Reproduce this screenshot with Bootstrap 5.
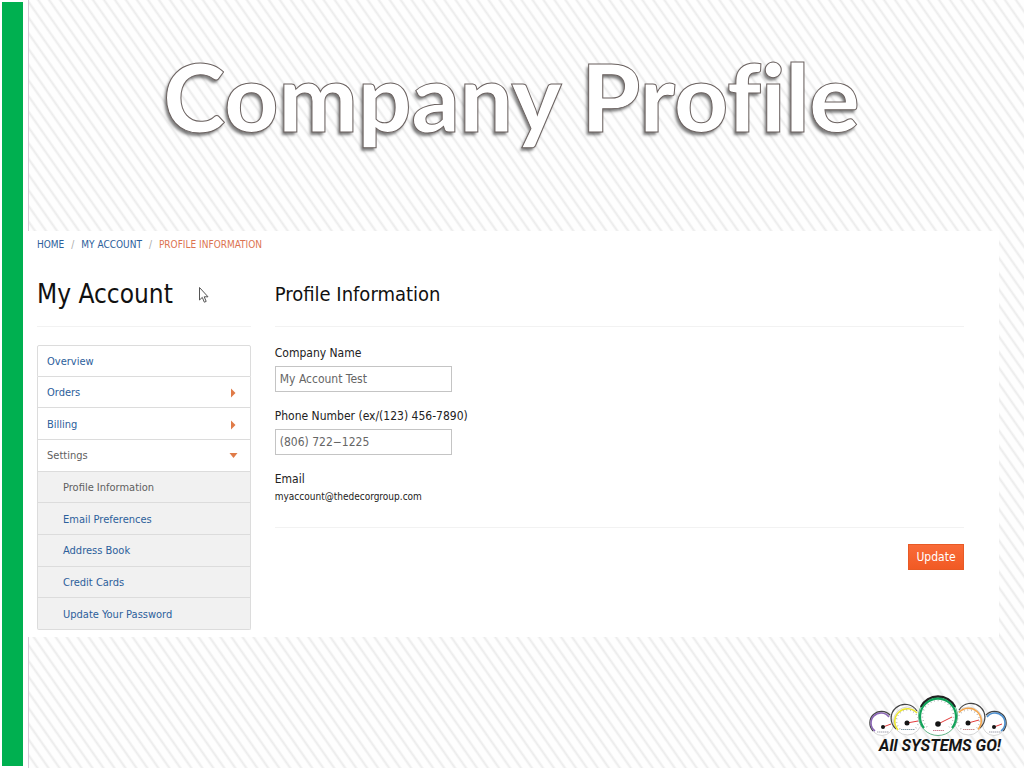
<!DOCTYPE html>
<html lang="en">
<head>
<meta charset="utf-8">
<meta name="viewport" content="width=device-width, initial-scale=1">
<title>Company Profile</title>
<link href="https://cdn.jsdelivr.net/npm/bootstrap@5.3.0/dist/css/bootstrap.min.css" rel="stylesheet">
<style>
body { font-family: "DejaVu Sans Condensed", "DejaVu Sans", sans-serif; font-size: 12px; line-height: 16px; color: #222; background: #fff; }
a { color: #2c609b; text-decoration: none; }
.side-bar { width: 21px; margin: 2px 5px 2px 2px; background: #00b050; }
.slide { border-left: 1px solid #d6cbd8; background: repeating-linear-gradient(55deg, #fefefe 0, #fefefe 5px, #ebebeb 7px, #fefefe 9px); }
.slide-title { font: 900 94px/115px Lato, sans-serif; font-variant-ligatures: none; color: #fff; -webkit-text-stroke: 1px #6b6260; text-shadow: -2px 3px 3px rgba(0,0,0,.5); padding: 38px 30px 78px 0; margin: 0; }
.panel { background: #fff; margin: 0 25px 0 -4px; padding: 6px 35px 7px 12px; }
.breadcrumb { font-size: 10px; margin-bottom: 25px; --bs-breadcrumb-item-padding-x: 7px; --bs-breadcrumb-divider-color: #aaa; --bs-breadcrumb-item-active-color: #dc7350; }
h2 { font-size: 26px; line-height: 32px; color: #111; margin: 0; font-weight: 400; }
h3 { font-size: 20px; line-height: 32px; color: #111; margin: 0; font-weight: 400; }
hr { border-color: #ccc; margin: 16px 0 18px; }
.side-menu { display: grid; grid-auto-rows: 1fr; min-height: 285px; font-size: 11px; --bs-list-group-border-radius: 2px; --bs-list-group-border-color: #dcdcdc; }
.side-menu .list-group-item { display: flex; align-items: center; justify-content: space-between; padding: 2px 12px 0 9px; color: #2c609b; }
.side-menu .sub-item { background: #f1f1f1; padding-left: 25px; }
.side-menu .current { color: #5f5f5f; }
.field { width: 177px; height: 26px; border: 1px solid #c4c4c4; border-radius: 0; padding: 0 4px; font-size: 12px; color: #666; }
.form-label { margin-bottom: 5px; }
.mail { font-size: 10px; margin-top: 2px; }
.form-end { margin: 22px 0 16px; }
.btn-update { width: 56px; height: 26px; padding: 0; border: 1px solid #e85a25; border-radius: 0; font-size: 12px; line-height: 16px; color: #fff; background: linear-gradient(#f96b38, #f15a24); }
.btn-update:hover { color: #fff; background: #e85a25; }
.pointer { left: 161px; top: 8px; }
.logo { margin: 0 15px 12px 0; }
</style>
</head>
<body>
<div class="d-flex min-vh-100">
  <div class="side-bar flex-shrink-0"></div>
  <main class="slide flex-grow-1 d-flex flex-column">
    <h1 class="slide-title text-center">Company Profile</h1>
    <section class="panel">
      <nav aria-label="breadcrumb">
        <ol class="breadcrumb">
          <li class="breadcrumb-item"><a href="#">HOME</a></li>
          <li class="breadcrumb-item"><a href="#">MY ACCOUNT</a></li>
          <li class="breadcrumb-item active" aria-current="page">PROFILE INFORMATION</li>
        </ol>
      </nav>
      <div class="row">
        <div class="col-3">
          <div class="position-relative">
            <h2>My Account</h2>
            <svg class="pointer position-absolute" width="12" height="18" viewBox="0 0 12 18"><path d="M1.500 1.500v12.500l2.800-2.600 2 4.800 1.900-.8-2-4.600h3.800z" fill="#fff" stroke="#555"/></svg>
          </div>
          <hr>
          <div class="list-group side-menu">
            <a href="#" class="list-group-item">Overview</a>
            <a href="#" class="list-group-item">Orders <svg width="9" height="10"><path d="M2 0.500L6.500 5 2 9.500z" fill="#e07b48"/></svg></a>
            <a href="#" class="list-group-item">Billing <svg width="9" height="10"><path d="M2 0.500L6.500 5 2 9.500z" fill="#e07b48"/></svg></a>
            <a href="#" class="list-group-item current">Settings <svg width="9" height="10"><path d="M0.500 2h8L4.500 7z" fill="#e07b48"/></svg></a>
            <a href="#" class="list-group-item sub-item current">Profile Information</a>
            <a href="#" class="list-group-item sub-item">Email Preferences</a>
            <a href="#" class="list-group-item sub-item">Address Book</a>
            <a href="#" class="list-group-item sub-item">Credit Cards</a>
            <a href="#" class="list-group-item sub-item">Update Your Password</a>
          </div>
        </div>
        <form class="col-9">
          <h3>Profile Information</h3>
          <hr>
          <div class="mb-3">
            <label class="form-label d-block" for="company">Company Name</label>
            <input class="field form-control" id="company" type="text" value="My Account Test">
          </div>
          <div class="mb-3">
            <label class="form-label d-block" for="phone">Phone Number (ex/(123) 456-7890)</label>
            <input class="field form-control" id="phone" type="tel" value="(806) 722−1225">
          </div>
          <div>Email</div>
          <div class="mail">myaccount@thedecorgroup.com</div>
          <hr class="form-end">
          <div class="text-end"><button type="button" class="btn btn-update">Update</button></div>
        </form>
      </div>
    </section>
    <footer class="mt-auto text-end">
      <svg class="logo" width="142" height="62" viewBox="867 693 142 62" role="img" aria-label="All Systems Go!">
        <g fill="#fff">
          <circle cx="882" cy="723" r="12"/><circle cx="994" cy="723" r="12"/>
          <circle cx="907.500" cy="720" r="14.500"/><circle cx="968.500" cy="720" r="14.500"/>
          <circle cx="938" cy="715" r="20"/>
        </g>
        <g fill="none" stroke="#bbb" stroke-width=".6">
          <circle cx="882" cy="723" r="11.500"/><circle cx="994" cy="723" r="11.500"/>
          <circle cx="907.500" cy="720" r="14"/><circle cx="968.500" cy="720" r="14"/>
        </g>
        <g fill="none" stroke="#444" stroke-width="1.200">
          <path d="M873 730a11.500 11.500 0 1 1 17-16M986 714a11.500 11.500 0 1 1 17 16"/>
          <path d="M896 728a14 14 0 1 1 21-18M959 709a14 14 0 1 1 21 18"/>
        </g>
        <g fill="none" stroke-width="1.600">
          <path d="M875 730a10 10 0 1 1 14-14" stroke="#8a65b5"/>
          <path d="M898 729a12.500 12.500 0 1 1 19-17" stroke="#eee72e"/>
          <path d="M959 711.500a12.500 12.500 0 1 1 19 17" stroke="#f5a54a"/>
          <path d="M987 716a10 10 0 1 1 14 14" stroke="#4c8fd0"/>
        </g>
        <circle cx="938" cy="715" r="19.500" fill="#fff" stroke="#3c9f69" stroke-width=".8"/>
        <path d="M921 706a19 19 0 0 1 34 0" fill="none" stroke="#222" stroke-width="2.500"/>
        <path d="M924 727a18 18 0 1 1 28 0" fill="none" stroke="#12a35a" stroke-width="2.200"/>
        <g fill="none" stroke="#999" stroke-dasharray=".6 3" stroke-width="1.500">
          <path d="M927 726a15.500 15.500 0 1 1 22 0M900 728a11 11 0 1 1 15 0M961 728a11 11 0 1 1 15 0"/>
        </g>
        <g stroke="#e23b3b" stroke-width="1">
          <path d="M938 723l14-7M907 722l11-2M968 722l11-3M883 726l8-3M994 726l8-3"/>
        </g>
        <g fill="#151515">
          <circle cx="938" cy="723" r="2.800"/><circle cx="907" cy="722" r="2.500"/><circle cx="968" cy="722" r="2.500"/><circle cx="883" cy="726" r="2"/><circle cx="994" cy="726" r="2"/>
        </g>
        <g stroke-width="1.200" stroke-dasharray="1.500 .5" opacity=".65">
          <path d="M933 729.500h11" stroke="#b33a55"/><path d="M901 728.500h14" stroke="#467"/><path d="M963 728.500h12" stroke="#a55"/><path d="M877 731h12M989 731h12" stroke="#778"/>
        </g>
        <text x="940" y="750" text-anchor="middle" font-family="Roboto, sans-serif" font-weight="700" font-style="italic" font-size="16" fill="#151515">All SYSTEMS GO!</text>
      </svg>
    </footer>
  </main>
</div>
<script src="https://cdn.jsdelivr.net/npm/bootstrap@5.3.0/dist/js/bootstrap.bundle.min.js"></script>
</body>
</html>
